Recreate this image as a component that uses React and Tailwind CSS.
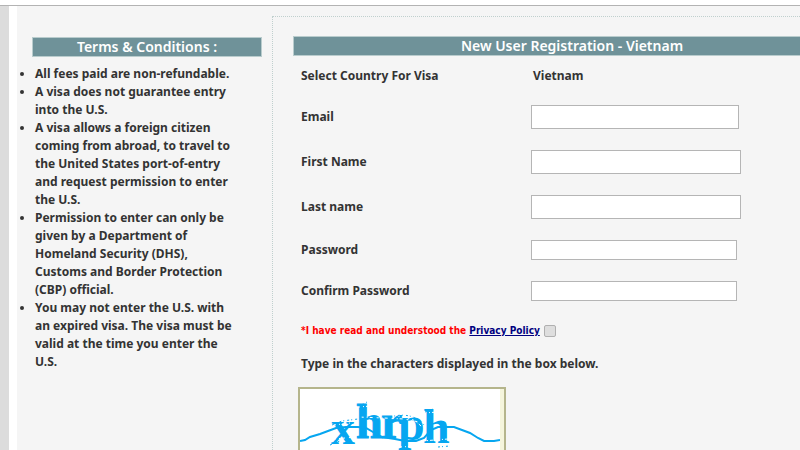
import { useState } from 'react';

const terms = [
  'All fees paid are non-refundable.',
  'A visa does not guarantee entry into the U.S.',
  'A visa allows a foreign citizen coming from abroad, to travel to the United States port-of-entry and request permission to enter the U.S.',
  'Permission to enter can only be given by a Department of Homeland Security (DHS), Customs and Border Protection (CBP) official.',
  'You may not enter the U.S. with an expired visa. The visa must be valid at the time you enter the U.S.',
];

const fields = [
  { id: 'email', label: 'Email', type: 'email', row: 'h-[45px]', box: 'h-6 w-52' },
  { id: 'firstName', label: 'First Name', type: 'text', row: 'h-[45px]', box: 'h-6 w-[210px]' },
  { id: 'lastName', label: 'Last name', type: 'text', row: 'h-[45px]', box: 'h-6 w-[210px]' },
  { id: 'password', label: 'Password', type: 'password', row: 'h-[41px]', box: 'h-5 w-[206px]' },
  { id: 'confirmPassword', label: 'Confirm Password', type: 'password', row: 'h-[41px]', box: 'h-5 w-[206px]' },
];

const SectionTitle = ({ children }) => (
  <h2 className="h-5 border border-[#b9cccd] bg-[#6f9299] text-center text-[14px] leading-[18px] font-semibold text-white">
    {children}
  </h2>
);

const Captcha = () => (
  <div className="w-52 border-2 border-[#b5b58c] bg-[#f5f5dc]">
    <svg width="200" height="70" viewBox="0 0 200 70" className="block bg-white" role="img" aria-label="Captcha">
      <g fill="#06a6f0" stroke="#06a6f0" strokeWidth="1" fontFamily="Liberation Serif, serif" fontSize="48">
        <text x="31" y="55" strokeWidth="0">x</text>
        <text x="56" y="49">h</text>
        <text x="81" y="49">r</text>
        <text x="98" y="51" strokeWidth="0">p</text>
        <text x="123" y="54" strokeWidth="0">h</text>
      </g>
      {/* worn edges */}
      <g fill="none" stroke="#ffffff" strokeWidth="1" strokeDasharray="2 3 1 2 3 4">
        <path d="M32 32 L58 28 L84 29 L104 30 L124 34" />
        <path d="M34 36 L50 34" />
        <path d="M58 18 L72 17" />
        <path d="M98 27 Q110 26 122 38" />
        <path d="M124 24 L138 23" />
        <path d="M34 50 L56 48" />
        <path d="M122 52 L148 50" />
        <path d="M100 58 L118 57" />
      </g>
      {/* stray specks round the letters */}
      <g fill="none" stroke="#06a6f0" strokeWidth="1" strokeDasharray="2 2 1 3">
        <path d="M32 36 L42 32 L58 30" />
        <path d="M59 17 L67 13" />
        <path d="M70 30 L78 28" />
        <path d="M90 28 Q112 22 124 36" />
        <path d="M125 23 L133 20" />
        <path d="M30 56 L40 52" />
        <path d="M138 58 L150 57" />
      </g>
      <path
        d="M0 52 L5 51 L10 48 L20 45 L28 42 L36 39 L46 38 L58 38 L66 39 L73 43 L82 48 L95 50 L105 52 L116 52 L124 49 L131 41 L138 38 L154 38 L162 41 L170 44 L178 49 L184 52 L194 52 L200 51"
        fill="none"
        stroke="#06a6f0"
        strokeWidth="2"
      />
    </svg>
  </div>
);

const App = () => {
  const [values, setValues] = useState({});
  const [agreed, setAgreed] = useState(false);

  const handleChange = (e) => setValues({ ...values, [e.target.name]: e.target.value });

  return (
    <div className="flex h-screen flex-col overflow-hidden bg-white font-['Noto_Sans',sans-serif] text-[12px] leading-[18px] font-bold text-[#333333]">
      <div className="h-[5px] shrink-0" />
      <div className="flex min-h-0 flex-1 border-t border-[#b3b3b3]">
        <div className="w-[9px] shrink-0 bg-[#dcdcdc]" />
        <main className="ml-2 flex min-w-0 flex-1 items-start bg-[#f5f5f5]">
          {/* Terms column */}
          <aside className="ml-[15px] w-[230px] shrink-0 pt-[31px]">
            <SectionTitle>Terms &amp; Conditions :</SectionTitle>
            <ul className="mt-2 ml-[3px] w-[204px] list-disc">
              {terms.map((term) => (
                <li key={term}>{term}</li>
              ))}
            </ul>
          </aside>

          {/* Registration form */}
          <form className="mt-2.5 ml-2.5 min-w-[600px] flex-1 border border-dotted border-[#c0d0ce] px-5 pt-[19px]">
            <SectionTitle>New User Registration - Vietnam</SectionTitle>
            <div className="px-2">
              <div className="flex h-10 items-center">
                <span className="w-[232px] shrink-0">Select Country For Visa</span>
                <span>Vietnam</span>
              </div>
              {fields.map((field) => (
                <div key={field.id} className={`pt-[9px] ${field.row}`}>
                  <div className="flex items-center">
                    <label htmlFor={field.id} className="w-[230px] shrink-0">{field.label}</label>
                    <input
                      id={field.id}
                      name={field.id}
                      type={field.type}
                      value={values[field.id] || ''}
                      onChange={handleChange}
                      className={`border border-[#b5b5b5] bg-white px-1 ${field.box}`}
                    />
                  </div>
                </div>
              ))}
              <div className="flex h-9 items-center gap-1 font-['DejaVu_Sans_Condensed',sans-serif] text-[10px] text-[#ff0000]">
                <label htmlFor="agree">
                  *I have read and understood the{' '}
                  <a href="#privacy" className="text-[#000080] underline">Privacy Policy</a>
                </label>
                <input
                  id="agree"
                  type="checkbox"
                  checked={agreed}
                  onChange={(e) => setAgreed(e.target.checked)}
                  className="h-3 w-3 appearance-none rounded-[2px] border border-[#b0b0b0] bg-[#dedede] checked:bg-[#6f9299]"
                />
              </div>
              <p className="mt-1.5">Type in the characters displayed in the box below.</p>
            </div>
            <div className="mt-3.5 ml-[5px]">
              <Captcha />
            </div>
          </form>
        </main>
      </div>
    </div>
  );
};

export default App;
